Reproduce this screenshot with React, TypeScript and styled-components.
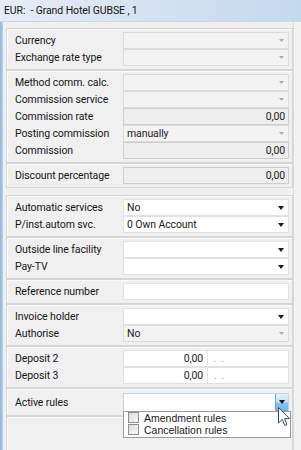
import React from 'react';
import styled, { createGlobalStyle } from 'styled-components';

const GlobalStyle = createGlobalStyle`
  html, body {
    margin: 0;
    padding: 0;
  }
  body {
    width: 301px;
    height: 450px;
    overflow: hidden;
    background: #f0f0f0;
    font-family: Roboto, "Open Sans", sans-serif;
    font-size: 10.5px;
    letter-spacing: -0.1px;
    color: #161616;
  }
`;

const Window = styled.div`
  width: 301px;
  height: 450px;
  display: flex;
  flex-direction: column;
`;

const TitleBar = styled.div`
  height: 21px;
  flex: none;
  display: flex;
  align-items: center;
  padding-left: 4px;
  font-size: 10.5px;
  background: linear-gradient(to right, #e6edf6 0%, #d6e3f1 45%, #c4d8ed 100%);
  color: #151515;
  white-space: pre;
`;

const Body = styled.div`
  flex: 1;
  display: flex;
  min-height: 0;
  border-top: 1px solid #c8d6e5;
`;

const LeftFrame = styled.div`
  width: 3px;
  flex: none;
  background: linear-gradient(to right, #96b6d9, #b9d0e9);
`;

const Form = styled.div`
  width: 290px;
  flex: none;
  display: flex;
  flex-direction: column;
  padding: 6px 0 0 3px;
  box-sizing: border-box;
`;

const RightStrip = styled.div`
  flex: 1;
  border-left: 1px solid #dadada;
  background: #f2f2f2;
`;

const Group = styled.div<{ $gap?: number; $fill?: boolean }>`
  border: 1px solid #d5d5d5;
  box-shadow: inset 1px 1px 0 #fbfbfb;
  padding: 3px 3px 3px 8px;
  margin-top: ${(p) => p.$gap ?? 0}px;
  ${(p) => (p.$fill ? 'flex: 1; border-bottom: none;' : '')}
`;

const Row = styled.div`
  display: grid;
  grid-template-columns: 108px 166px;
  height: 17px;
  align-items: center;
`;

const Label = styled.div`
  white-space: nowrap;
  color: #161616;
`;

type Variant = 'disabled' | 'edit' | 'white';

const Field = styled.div<{ $variant: Variant; $align?: 'left' | 'right' }>`
  position: relative;
  box-sizing: border-box;
  height: 17px;
  display: flex;
  align-items: center;
  justify-content: ${(p) => (p.$align === 'right' ? 'flex-end' : 'flex-start')};
  padding: 0 ${(p) => (p.$align === 'right' ? '3px' : '14px')} 0 3px;
  white-space: nowrap;
  color: #1a1a1a;
  background: ${(p) =>
    p.$variant === 'white' ? '#ffffff' : p.$variant === 'edit' ? '#eeeeee' : '#f3f3f3'};
  border: 1px solid
    ${(p) => (p.$variant === 'white' ? '#e1e1e1' : p.$variant === 'edit' ? '#cdcdcd' : '#dbdbdb')};
`;

const Arrow = styled.svg<{ $dark?: boolean }>`
  position: absolute;
  right: 4px;
  top: 50%;
  margin-top: -2px;
  fill: ${(p) => (p.$dark ? '#1a1a1a' : '#a8a8a8')};
`;

const Split = styled.div`
  display: flex;
`;

const Amount = styled(Field)`
  width: 85px;
  padding-right: 4px;
`;

const DateField = styled(Field)`
  flex: 1;
  color: #9a9a9a;
  letter-spacing: 1px;
  padding-left: 6px;
  border-left: none;
`;

const ActiveCombo = styled(Field)`
  height: 19px;
  border-color: #bcd5ec;
  overflow: visible;
`;

const ActiveRow = styled(Row)`
  height: 20px;
`;

const BlueButton = styled.div`
  position: absolute;
  right: 0;
  top: 0;
  bottom: 0;
  width: 12px;
  border-left: 1px solid #5ea7dc;
  background: linear-gradient(to bottom, #e3f3fd 0%, #bfe2f8 45%, #84c3ec 55%, #6db6e8 100%);
  display: flex;
  align-items: center;
  justify-content: center;
`;

const DropList = styled.div`
  position: absolute;
  left: -1px;
  top: 17px;
  width: 168px;
  box-sizing: border-box;
  background: #ffffff;
  border: 1px solid #9c9c9c;
  padding: 0 3px 1px 4px;
  z-index: 2;
  font-family: "Liberation Sans", Arial, sans-serif;
  font-size: 10.5px;
  letter-spacing: 0;
`;

const Option = styled.div`
  display: flex;
  align-items: center;
  height: 12px;
  line-height: 12px;
  gap: 5px;
  color: #1a1a1a;
`;

const Check = styled.span`
  width: 9px;
  height: 9px;
  flex: none;
  border: 1px solid #8e8f8f;
  background: linear-gradient(135deg, #dcdcdc, #f8f8f8);
`;

const Cursor = styled.svg`
  position: absolute;
  right: -2px;
  top: 13px;
  z-index: 3;
`;

const DownArrow = ({ dark }: { dark?: boolean }) => (
  <Arrow $dark={dark} width={dark ? 6 : 5} height={dark ? 4 : 3} viewBox={dark ? '0 0 6 4' : '0 0 5 3'}>
    {dark ? <path d="M0 0h6L3 4z" /> : <path d="M0 0h5L2.5 3z" />}
  </Arrow>
);

interface RowProps {
  label: string;
  value?: string;
  variant: Variant;
  combo?: boolean;
  align?: 'left' | 'right';
}

const FormRow: React.FC<RowProps> = ({ label, value, variant, combo, align }) => (
  <Row>
    <Label>{label}</Label>
    <Field $variant={variant} $align={align}>
      {value}
      {combo && <DownArrow dark={variant === 'white'} />}
    </Field>
  </Row>
);

const DepositRow: React.FC<{ label: string }> = ({ label }) => (
  <Row>
    <Label>{label}</Label>
    <Split>
      <Amount $variant="white" $align="right">0,00</Amount>
      <DateField $variant="white">. .</DateField>
    </Split>
  </Row>
);

const App: React.FC = () => {
  return (
    <Window>
      <GlobalStyle />
      <TitleBar>EUR:  - Grand Hotel GUBSE , 1</TitleBar>
      <Body>
        <LeftFrame />
        <Form>
          <Group>
            <FormRow label="Currency" variant="disabled" combo />
            <FormRow label="Exchange rate type" variant="disabled" combo />
          </Group>
          <Group>
            <FormRow label="Method comm. calc." variant="disabled" combo />
            <FormRow label="Commission service" variant="disabled" combo />
            <FormRow label="Commission rate" variant="edit" value="0,00" align="right" />
            <FormRow label="Posting commission" variant="disabled" value="manually" combo />
            <FormRow label="Commission" variant="edit" value="0,00" align="right" />
          </Group>
          <Group>
            <FormRow label="Discount percentage" variant="edit" value="0,00" align="right" />
          </Group>
          <Group $gap={7}>
            <FormRow label="Automatic services" variant="white" value="No" combo />
            <FormRow label="P/inst.autom svc." variant="white" value="0 Own Account" combo />
          </Group>
          <Group>
            <FormRow label="Outside line facility" variant="white" combo />
            <FormRow label="Pay-TV" variant="white" combo />
          </Group>
          <Group>
            <FormRow label="Reference number" variant="white" />
          </Group>
          <Group>
            <FormRow label="Invoice holder" variant="white" combo />
            <FormRow label="Authorise" variant="disabled" value="No" combo />
          </Group>
          <Group>
            <DepositRow label="Deposit 2" />
            <DepositRow label="Deposit 3" />
          </Group>
          <Group>
            <ActiveRow>
              <Label>Active rules</Label>
              <ActiveCombo $variant="white">
                <BlueButton>
                  <svg width="6" height="4" viewBox="0 0 6 4">
                    <path d="M0 0h6L3 4z" fill="#1a1a1a" />
                  </svg>
                </BlueButton>
                <DropList>
                  <Option>
                    <Check />
                    Amendment rules
                  </Option>
                  <Option>
                    <Check />
                    Cancellation rules
                  </Option>
                </DropList>
                <Cursor width="12" height="20" viewBox="0 0 12 20">
                  <path
                    d="M0.5 0.5 L0.5 16 L4.3 12.4 L6.8 18.5 L9 17.6 L6.5 11.6 L11.5 11.6 Z"
                    fill="#ffffff"
                    stroke="#3a4a5a"
                    strokeWidth="1"
                    strokeLinejoin="round"
                  />
                </Cursor>
              </ActiveCombo>
            </ActiveRow>
          </Group>
          <Group $fill />
        </Form>
        <RightStrip />
      </Body>
    </Window>
  );
};

export default App;
